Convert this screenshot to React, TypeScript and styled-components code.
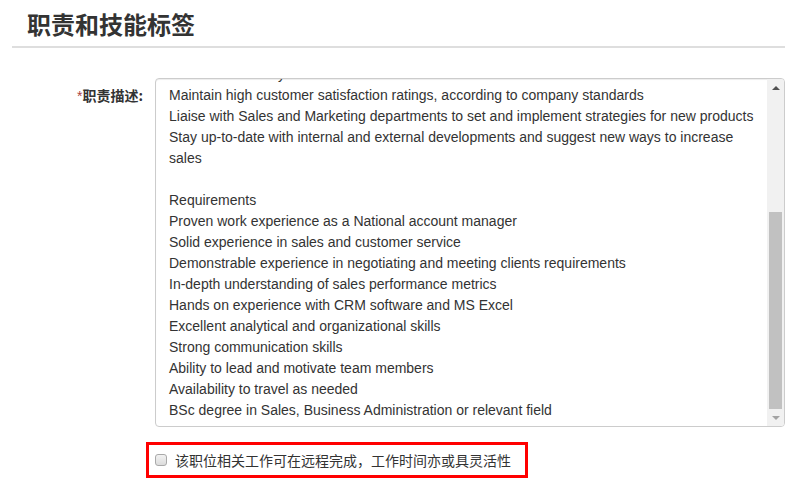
import styled, { createGlobalStyle } from 'styled-components';

const GlobalStyle = createGlobalStyle`
  body {
    margin: 0;
    background: #fff;
    font-family: "Liberation Sans", Arial, "Noto Sans CJK SC", sans-serif;
    color: #333;
  }
`;

const Page = styled.div`
  width: 773px;
  margin-left: 12px;
`;

const Header = styled.div`
  padding: 7px 0 5px 15px;
  border-bottom: 2px solid #dedede;
`;

const Title = styled.h2`
  margin: 0;
  font-family: "Noto Sans CJK SC", sans-serif;
  font-size: 24px;
  line-height: 34px;
  font-weight: 700;
  color: #333;
`;

const FormRow = styled.div`
  display: flex;
  margin-top: 30px;
`;

const Label = styled.label`
  width: 131px;
  flex: none;
  padding-top: 7px;
  text-align: right;
  font-family: "Noto Sans CJK SC", sans-serif;
  font-size: 14px;
  line-height: 20px;
  font-weight: 700;
  color: #333;
`;

const Required = styled.span`
  color: #a94442;
  font-weight: 400;
  font-family: "Liberation Sans", sans-serif;
`;

// textarea look-alike, scrolled all the way down
const TextBox = styled.div`
  margin-left: 12px;
  flex: 1;
  height: 347px;
  display: flex;
  border: 1px solid #ccc;
  border-radius: 4px;
  box-shadow: inset 0 1px 1px rgba(0, 0, 0, 0.075);
  overflow: hidden;
`;

const Viewport = styled.div`
  flex: 1;
  display: flex;
  flex-direction: column;
  justify-content: flex-end;
  overflow: hidden;
  padding: 0 12px 5px 13px;
  font-size: 14px;
  line-height: 21px;
  color: #333;
`;

const Line = styled.div`
  min-height: 21px;
  white-space: nowrap;
`;

const ScrollBar = styled.div`
  width: 17px;
  flex: none;
  display: flex;
  flex-direction: column;
  background: #f1f1f1;
`;

const ArrowButton = styled.div`
  height: 17px;
  flex: none;
  display: flex;
  align-items: center;
  justify-content: center;
`;

const Arrow = styled.div<{ $dir: 'up' | 'down'; $disabled?: boolean }>`
  width: 0;
  height: 0;
  border-left: 4px solid transparent;
  border-right: 4px solid transparent;
  ${(p) =>
    p.$dir === 'up'
      ? `border-bottom: 4px solid ${p.$disabled ? '#a3a3a3' : '#505050'};`
      : `border-top: 4px solid ${p.$disabled ? '#a3a3a3' : '#505050'};`}
`;

const Track = styled.div`
  flex: 1;
  display: flex;
  flex-direction: column;
  justify-content: flex-end;
  padding: 0 2px;
`;

const Thumb = styled.div`
  height: 197px;
  background: #c1c1c1;
`;

const OptionRow = styled.div`
  margin: 15px 0 0 134px;
  width: 370px;
  height: 30px;
  border: 3px solid #f00;
  display: flex;
  align-items: center;
  gap: 8px;
  padding-left: 6px;
`;

const Check = styled.input`
  appearance: none;
  margin: 0;
  width: 12px;
  height: 12px;
  border: 1px solid #a9a9a9;
  border-radius: 3px;
  background: linear-gradient(#f2f2f2, #dcdcdc);
`;

const OptionText = styled.span`
  font-family: "Noto Sans CJK SC", sans-serif;
  font-size: 14px;
  line-height: 20px;
  color: #333;
`;

const lines = [
  'Understand all key client needs and act on them',
  'Maintain high customer satisfaction ratings, according to company standards',
  'Liaise with Sales and Marketing departments to set and implement strategies for new products',
  'Stay up-to-date with internal and external developments and suggest new ways to increase',
  'sales',
  '',
  'Requirements',
  'Proven work experience as a National account manager',
  'Solid experience in sales and customer service',
  'Demonstrable experience in negotiating and meeting clients requirements',
  'In-depth understanding of sales performance metrics',
  'Hands on experience with CRM software and MS Excel',
  'Excellent analytical and organizational skills',
  'Strong communication skills',
  'Ability to lead and motivate team members',
  'Availability to travel as needed',
  'BSc degree in Sales, Business Administration or relevant field',
];

export default function App() {
  return (
    <Page>
      <GlobalStyle />
      <Header>
        <Title>职责和技能标签</Title>
      </Header>
      <FormRow>
        <Label>
          <Required>*</Required>职责描述:
        </Label>
        <TextBox>
          <Viewport>
            {lines.map((line, i) => (
              <Line key={i}>{line}</Line>
            ))}
          </Viewport>
          <ScrollBar>
            <ArrowButton>
              <Arrow $dir="up" />
            </ArrowButton>
            <Track>
              <Thumb />
            </Track>
            <ArrowButton>
              <Arrow $dir="down" $disabled />
            </ArrowButton>
          </ScrollBar>
        </TextBox>
      </FormRow>
      <OptionRow>
        <Check type="checkbox" />
        <OptionText>该职位相关工作可在远程完成，工作时间亦或具灵活性</OptionText>
      </OptionRow>
    </Page>
  );
}
